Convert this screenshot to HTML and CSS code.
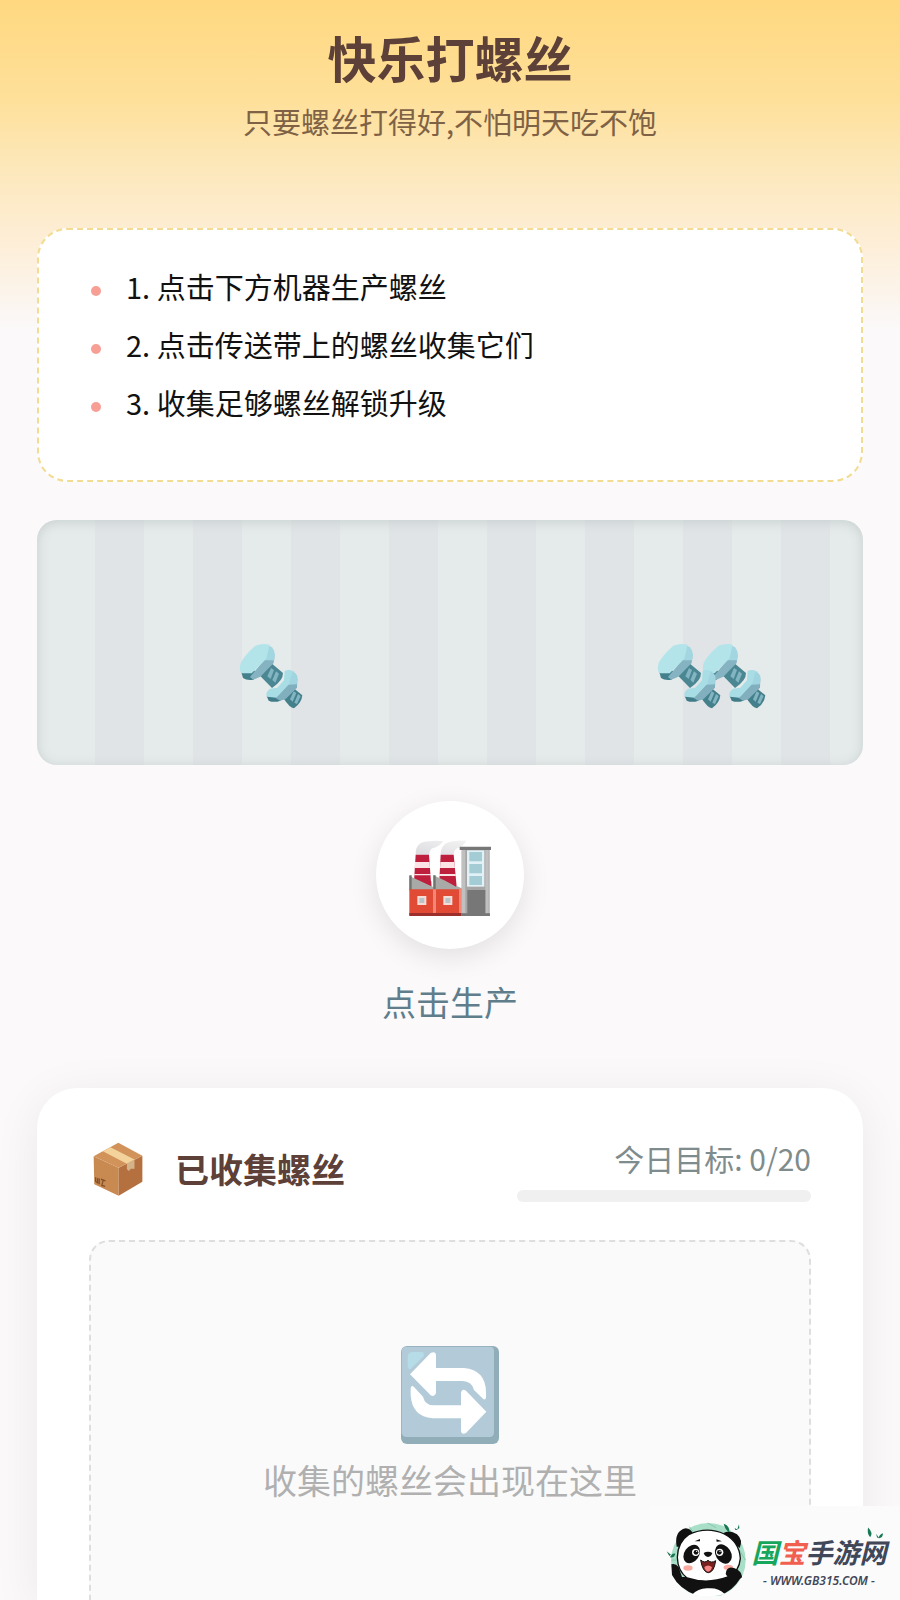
FILE: index.html
```
<!DOCTYPE html>
<html lang="zh-CN">
<head>
<meta charset="utf-8">
<meta name="viewport" content="width=device-width, initial-scale=1">
<title>快乐打螺丝</title>
<link rel="stylesheet" href="styles.css">
</head>
<body>
<svg class="defs" aria-hidden="true">
  <symbol id="bolt" viewBox="55 38 195 198">
    <path fill="#4a8793" d="M118 136 L154 100 L187 128 Q188 150 154 173 Z"/>
    <path fill="#82b5c1" d="M140 138 L151 113 L160 119 L150 146Z M155 149 L166 123 L175 130 L164 157Z"/>
    <path fill="#43808c" d="M62 126 L67 143 Q78 151 98 148 L118 130 L90 115Z"/>
    <path fill="#86b3c1" d="M88 140 L135 84 L162 72 L159 98 L119 139 L98 148Z"/>
    <path fill="#a2d6e1" d="M136 44 Q158 46 162 68 L161 90 L133 90Z"/>
    <path fill="#b2e4ea" d="M104 46 Q126 38 147 43 L137 85 L93 129 L63 129 Q54 122 60 98 Q70 76 104 46Z"/>
    <path fill="#43808c" d="M188 203 L218 173 L245 195 Q243 218 220 234 Q207 233 188 203Z"/>
    <path fill="#82b5c1" d="M208 207 L219 183 L227 188 L216 214Z M221 217 L232 191 L240 197 L229 221Z"/>
    <path fill="#3f7c88" d="M138 197 L144 211 Q160 218 179 211 L190 196Z"/>
    <path fill="#82afbe" d="M165 203 L206 158 L230 145 L229 172 L194 207 L178 211Z"/>
    <path fill="#a0d5e0" d="M204 119 Q232 124 231 147 L228 162 L203 163Z"/>
    <path fill="#a8dde6" d="M139 199 Q132 188 148 175 L170 172 L190 150 L192 122 Q204 116 216 122 L206 160 L167 202Z"/>
  </symbol>
</svg>
<div class="page">
  <header class="hero">
    <h1 class="hero-title">快乐打螺丝</h1>
    <p class="hero-subtitle">只要螺丝打得好,不怕明天吃不饱</p>
  </header>
  <main class="content">
    <section class="rules">
      <ul class="rules-list">
        <li class="rule">1. 点击下方机器生产螺丝</li>
        <li class="rule">2. 点击传送带上的螺丝收集它们</li>
        <li class="rule">3. 收集足够螺丝解锁升级</li>
      </ul>
    </section>
    <section class="conveyor" aria-label="传送带">
      <button class="screw screw-a" aria-label="螺丝"><svg class="screw-icon"><use href="#bolt"/></svg></button>
      <button class="screw screw-b" aria-label="螺丝"><svg class="screw-icon"><use href="#bolt"/></svg></button>
      <button class="screw screw-c" aria-label="螺丝"><svg class="screw-icon"><use href="#bolt"/></svg></button>
    </section>
    <section class="machine">
      <button class="machine-button" id="produce" aria-labelledby="produce-label">
        <svg class="factory" viewBox="176 180 246 228" aria-hidden="true">
          <defs>
            <linearGradient id="smoke" x1="0" y1="1" x2="1" y2="0"><stop offset="0" stop-color="#dcdcdf"/><stop offset="1" stop-color="#f3f3f4"/></linearGradient>
          </defs>
          <path fill="url(#smoke)" d="M196 224 Q194 184 238 184 Q256 181 279 184 Q264 202 246 205 Q236 212 237 224Z M271 224 Q271 187 310 184 Q328 180 348 182 Q338 200 320 205 Q310 212 310 224Z"/>
          <path fill="#bd1f3c" d="M196 224H236L243 320H190Z M271 224H310L319 320H266Z"/>
          <path fill="#fbe3e6" d="M194 246H238L239 264H193Z M270 246H312L314 264H269Z M192 282H241L242 286H191Z M267 282H316L317 288H266Z"/>
          <path fill="#a9a9a7" d="M177 288 L249 321 V286 L334 325 V332 H177Z"/>
          <path fill="#bd1f3c" d="M208 301 L243 304 V318Z M286 302 L317 305 V320Z"/>
          <path fill="#6f746f" d="M177 286H184V330H177Z M249 286H256V330H249Z"/>
          <path fill="#e14a34" d="M177 328H334V406H177Z"/>
          <path fill="#f18774" d="M248 328H257V400H248Z M326 325H334V400H326Z"/>
          <path fill="#9c2f2c" d="M177 399H334V408H177Z"/>
          <path fill="#f5dcd7" d="M201 348H228V375H201Z M279 348H306V375H279Z"/>
          <path fill="#b9c4ca" d="M207 354H222V369H207Z M285 354H300V369H285Z"/>
          <path fill="#a6a6a6" d="M334 208H418V406H334Z"/>
          <path fill="#c0c0c0" d="M334 208H345V400H334Z M405 208H415V400H405Z"/>
          <path fill="#777" d="M328 200H422V210H328Z M351 330H405V406H351Z M334 400H419V408H334Z"/>
          <path fill="#e1f1f5" d="M350 211H402V320H350Z"/>
          <path fill="#a4ccd5" d="M357 216H395V244H357Z M357 252H395V280H357Z M357 288H395V315H357Z"/>
        </svg>
      </button>
      <label class="machine-label" id="produce-label" for="produce">点击生产</label>
    </section>
    <section class="collection">
      <div class="collection-head">
        <div class="collection-name">
          <svg class="package" viewBox="40 38 150 164" aria-hidden="true">
            <path fill="#c98a52" d="M41 81 L117 116 V201 L43 166Z"/>
            <path fill="#b5703f" d="M117 116 L189 80 V159 L117 201Z"/>
            <path fill="#d2935a" d="M41 81 L116 40 L189 80 L117 116Z"/>
            <path fill="#f3d39b" d="M69 66 L92 54 L165 91 L142 104Z"/>
            <path fill="#d5b38a" d="M142 104 L165 91 V119 L154 119 L148 126 L142 121Z"/>
            <path fill="none" stroke="#82512b" stroke-width="4" d="M47 145V158L53 162V147 M58 149V166 M63 151L77 156 M70 154L66 170L76 173"/>
          </svg>
          <h2 class="collection-title">已收集螺丝</h2>
        </div>
        <div class="goal">
          <label class="goal-text" for="goal-bar">今日目标: 0/20</label>
          <progress class="goal-bar" id="goal-bar" value="0" max="20"></progress>
        </div>
      </div>
      <div class="tray">
        <svg class="cycle" viewBox="62 47 294 294" aria-hidden="true">
          <rect x="62" y="47" width="294" height="294" rx="18" fill="#91adb8"/>
          <path fill="#b3cbd8" d="M80 49H330Q341 49 341 62V306Q341 320 328 320H80Q64 320 64 306V65Q64 49 80 49Z"/>
          <path fill="#b5dce7" d="M96 65H124Q132 65 130 78L90 117Q82 117 82 104V79Q83 66 96 65Z"/>
          <path fill="#fff" d="M89 132 L151 68 Q166 61 167 75 V113 H251 Q316 119 317 185 V202 Q315 211 308 205 L281 179 Q275 153 247 152 H167 V188 Q163 202 151 195Z"/>
          <path fill="#fff" d="M318 244 L257 308 Q243 314 242 301 V264 H157 Q95 259 91 194 V174 Q93 162 101 170 L128 199 Q134 225 161 225 H242 V187 Q244 174 257 181Z"/>
        </svg>
        <p class="tray-text">收集的螺丝会出现在这里</p>
      </div>
    </section>
  </main>
  <aside class="watermark">
    <svg class="panda" viewBox="80 85 240 228" aria-hidden="true">
      <circle cx="207" cy="206" r="112" fill="#a9dfc8"/>
      <path fill="none" stroke="#86caae" stroke-width="3" d="M150 105L165 125 M205 94L230 108 M300 175L318 205 M97 205H120"/>
      <path fill="#111" d="M96 218Q108 214 118 226L128 256H262Q266 226 285 232Q303 240 307 254Q278 303 240 310H170Q120 292 98 250Z"/>
      <path fill="#fff" d="M157 310Q178 288 207 290Q238 288 256 307Q210 320 157 310Z"/>
      <path fill="#111" d="M112 165Q104 118 139 110Q155 111 160 125L126 165Z M251 125Q270 113 293 128Q312 145 301 169Z"/>
      <path fill="#fff" stroke="#111" stroke-width="4" d="M114 197Q115 151 148 129Q202 103 255 127Q300 151 303 200Q300 240 266 256Q203 279 143 259Q115 238 114 197Z"/>
      <path fill="#111" d="M166 149L182 142V149Z M231 143L248 149L232 150Z"/>
      <ellipse cx="157" cy="187" rx="22" ry="30" transform="rotate(35 157 187)" fill="#111"/>
      <ellipse cx="252" cy="187" rx="23" ry="31" transform="rotate(-32 252 187)" fill="#111"/>
      <circle cx="169" cy="182" r="11" fill="#fff"/><circle cx="241" cy="182" r="11" fill="#fff"/>
      <circle cx="170" cy="182" r="7" fill="#111"/><circle cx="240" cy="182" r="7" fill="#111"/>
      <circle cx="172" cy="179" r="2" fill="#fff"/><circle cx="242" cy="179" r="2" fill="#fff"/>
      <path fill="#111" d="M193 184Q206 177 219 184Q216 195 206 196Q196 194 193 184Z"/>
      <path fill="#79201f" stroke="#111" stroke-width="3" d="M184 205Q196 216 206 206Q216 216 229 207Q224 242 207 243Q190 242 184 205Z"/>
      <path fill="#f58585" d="M195 226Q207 216 218 227Q214 240 206 240Q198 239 195 226Z"/>
      <ellipse cx="146" cy="229" rx="14" ry="8" fill="#f9aaa0"/><ellipse cx="267" cy="227" rx="14" ry="8" fill="#f9aaa0"/>
      <path fill="#111" d="M259 247Q261 222 284 229Q307 237 308 257L280 278Z"/>
      <path fill="#17764f" d="M253 96Q272 102 270 122Q256 112 253 96Z M82 179L95 189L90 193Z M92 197Q98 183 108 186Q104 200 92 197Z M286 109L296 115H288Z M294 113L299 98L300 110Z"/>
    </svg>
    <div class="brand">
      <svg class="leaves" viewBox="672 110 52 40" aria-hidden="true"><path fill="#187a54" d="M678 114Q694 130 684 142Q674 132 678 114Z M701 132L711 146L704 143Z M709 145Q710 134 721 131Q721 145 709 145Z"/></svg>
      <div class="brand-name"><span class="brand-green">国</span><span class="brand-red">宝</span><span class="brand-dark">手游网</span></div>
      <div class="brand-url">- WWW.GB315.COM -</div>
    </div>
  </aside>
</div>
</body>
</html>
```
FILE: styles.css
```
* { box-sizing: border-box; }

body {
  margin: 0;
  font-family: "Noto Sans CJK SC", sans-serif;
  background: #fbf9fa;
}

h1, h2, p, ul { margin: 0; padding: 0; }

button {
  padding: 0;
  border: 0;
  background: none;
  cursor: pointer;
}

.defs { position: absolute; width: 0; height: 0; }

.page {
  display: flex;
  flex-direction: column;
  min-height: 100vh;
  background: linear-gradient(#ffd880 0, #fee09a 100px, #fde8bc 170px, #fdeed8 245px, #fbf9fa 330px);
}

.hero {
  padding: 29px 37px 85px;
  text-align: center;
}

.hero-title {
  font-size: 49px;
  line-height: 56px;
  font-weight: 700;
  color: #5d4037;
}

.hero-subtitle {
  margin-top: 14px;
  font-size: 29px;
  line-height: 44px;
  color: #7f6245;
}

.content {
  flex: 1;
  display: flex;
  flex-direction: column;
  padding: 0 37px;
}

.rules {
  padding: 34px 52px 42px;
  border: 2px dashed #f2dc91;
  border-radius: 30px;
  background: #fff;
}

.rules-list { list-style: none; }

.rule {
  display: flex;
  align-items: center;
  gap: 25px;
  margin-bottom: 14px;
  font-size: 29px;
  line-height: 44px;
  color: #111;
}

.rule::before {
  content: "";
  width: 10px;
  height: 10px;
  margin-top: 10px;
  border-radius: 50%;
  background: #f79f95;
}

.conveyor {
  position: relative;
  height: 245px;
  margin-top: 38px;
  border-radius: 20px;
  background: repeating-linear-gradient(90deg, #e5eaea 0 49px, #e0e4e6 49px 98px) 9px 0;
  box-shadow: inset 0 2px 12px #c8d0d0;
}

.screw {
  position: absolute;
  top: 123px;
  width: 65px;
  height: 66px;
}

.screw-icon { display: block; width: 100%; height: 100%; }
.screw-a { left: 24.4%; }
.screw-b { left: 75%; z-index: 1; }
.screw-c { left: 80.5%; }

.machine {
  display: flex;
  flex-direction: column;
  align-items: center;
  margin-top: 36px;
}

.machine-button {
  display: flex;
  align-items: center;
  justify-content: center;
  width: 148px;
  height: 148px;
  padding-top: 6px;
  border-radius: 50%;
  background: #fff;
  box-shadow: 0 8px 28px rgba(0, 0, 0, 0.1);
}

.factory { width: 82px; height: 76px; }

.machine-label {
  margin-top: 28px;
  font-size: 34px;
  line-height: 50px;
  color: #607d8b;
}

.collection {
  flex: 1;
  display: flex;
  flex-direction: column;
  margin-top: 61px;
  padding: 48px 52px 0;
  border-radius: 40px 40px 0 0;
  background: #fff;
  box-shadow: 0 8px 48px rgba(0, 0, 0, 0.07);
}

.collection-head {
  display: flex;
  align-items: center;
  justify-content: space-between;
}

.collection-name {
  display: flex;
  align-items: center;
  gap: 32px;
  padding-left: 4px;
}

.package { width: 50px; height: 54px; }

.collection-title {
  font-size: 34px;
  line-height: 50px;
  font-weight: 700;
  color: #5d4037;
}

.goal {
  display: flex;
  flex-direction: column;
  align-items: flex-end;
  gap: 10px;
}

.goal-text {
  font-size: 30px;
  line-height: 44px;
  color: #7f8c8d;
}

.goal-bar {
  display: block;
  width: 294px;
  height: 12px;
  appearance: none;
  border: 0;
  border-radius: 6px;
  background: #f0f0f0;
  overflow: hidden;
}

.goal-bar::-webkit-progress-bar { background: #f0f0f0; }
.goal-bar::-webkit-progress-value { background: #f79f95; }

.tray {
  flex: 1;
  display: flex;
  flex-direction: column;
  align-items: center;
  margin-top: 38px;
  padding: 104px 20px 93px;
  border: 2px dashed #dedede;
  border-bottom: 0;
  border-radius: 20px 20px 0 0;
  background: #fafafa;
}

.cycle { width: 98px; height: 98px; }

.tray-text {
  margin-top: 11px;
  font-size: 34px;
  line-height: 50px;
  color: #b0b0b0;
}

.watermark {
  position: fixed;
  right: 0;
  bottom: 0;
  z-index: 2;
  display: flex;
  gap: 4px;
  width: 250px;
  height: 94px;
  padding: 14px 12px 0 16px;
  background: #fbfbfb;
}

.panda { flex: none; width: 80px; height: 76px; }

.brand {
  position: relative;
  flex: 1;
  padding-top: 12px;
  text-align: center;
  white-space: nowrap;
  color: #3f4759;
}

.leaves {
  position: absolute;
  top: 6px;
  right: 4px;
  width: 18px;
  height: 14px;
}

.brand-name {
  display: flex;
  align-items: center;
  justify-content: center;
  height: 40px;
  font-size: 27px;
  line-height: 40px;
  font-weight: 700;
  font-style: italic;
}

.brand-green { color: #16a65c; }
.brand-red { color: #f15f50; }

.brand-url {
  font-family: "Noto Sans", sans-serif;
  font-size: 12px;
  line-height: 18px;
  font-weight: 600;
  font-style: italic;
}
```
